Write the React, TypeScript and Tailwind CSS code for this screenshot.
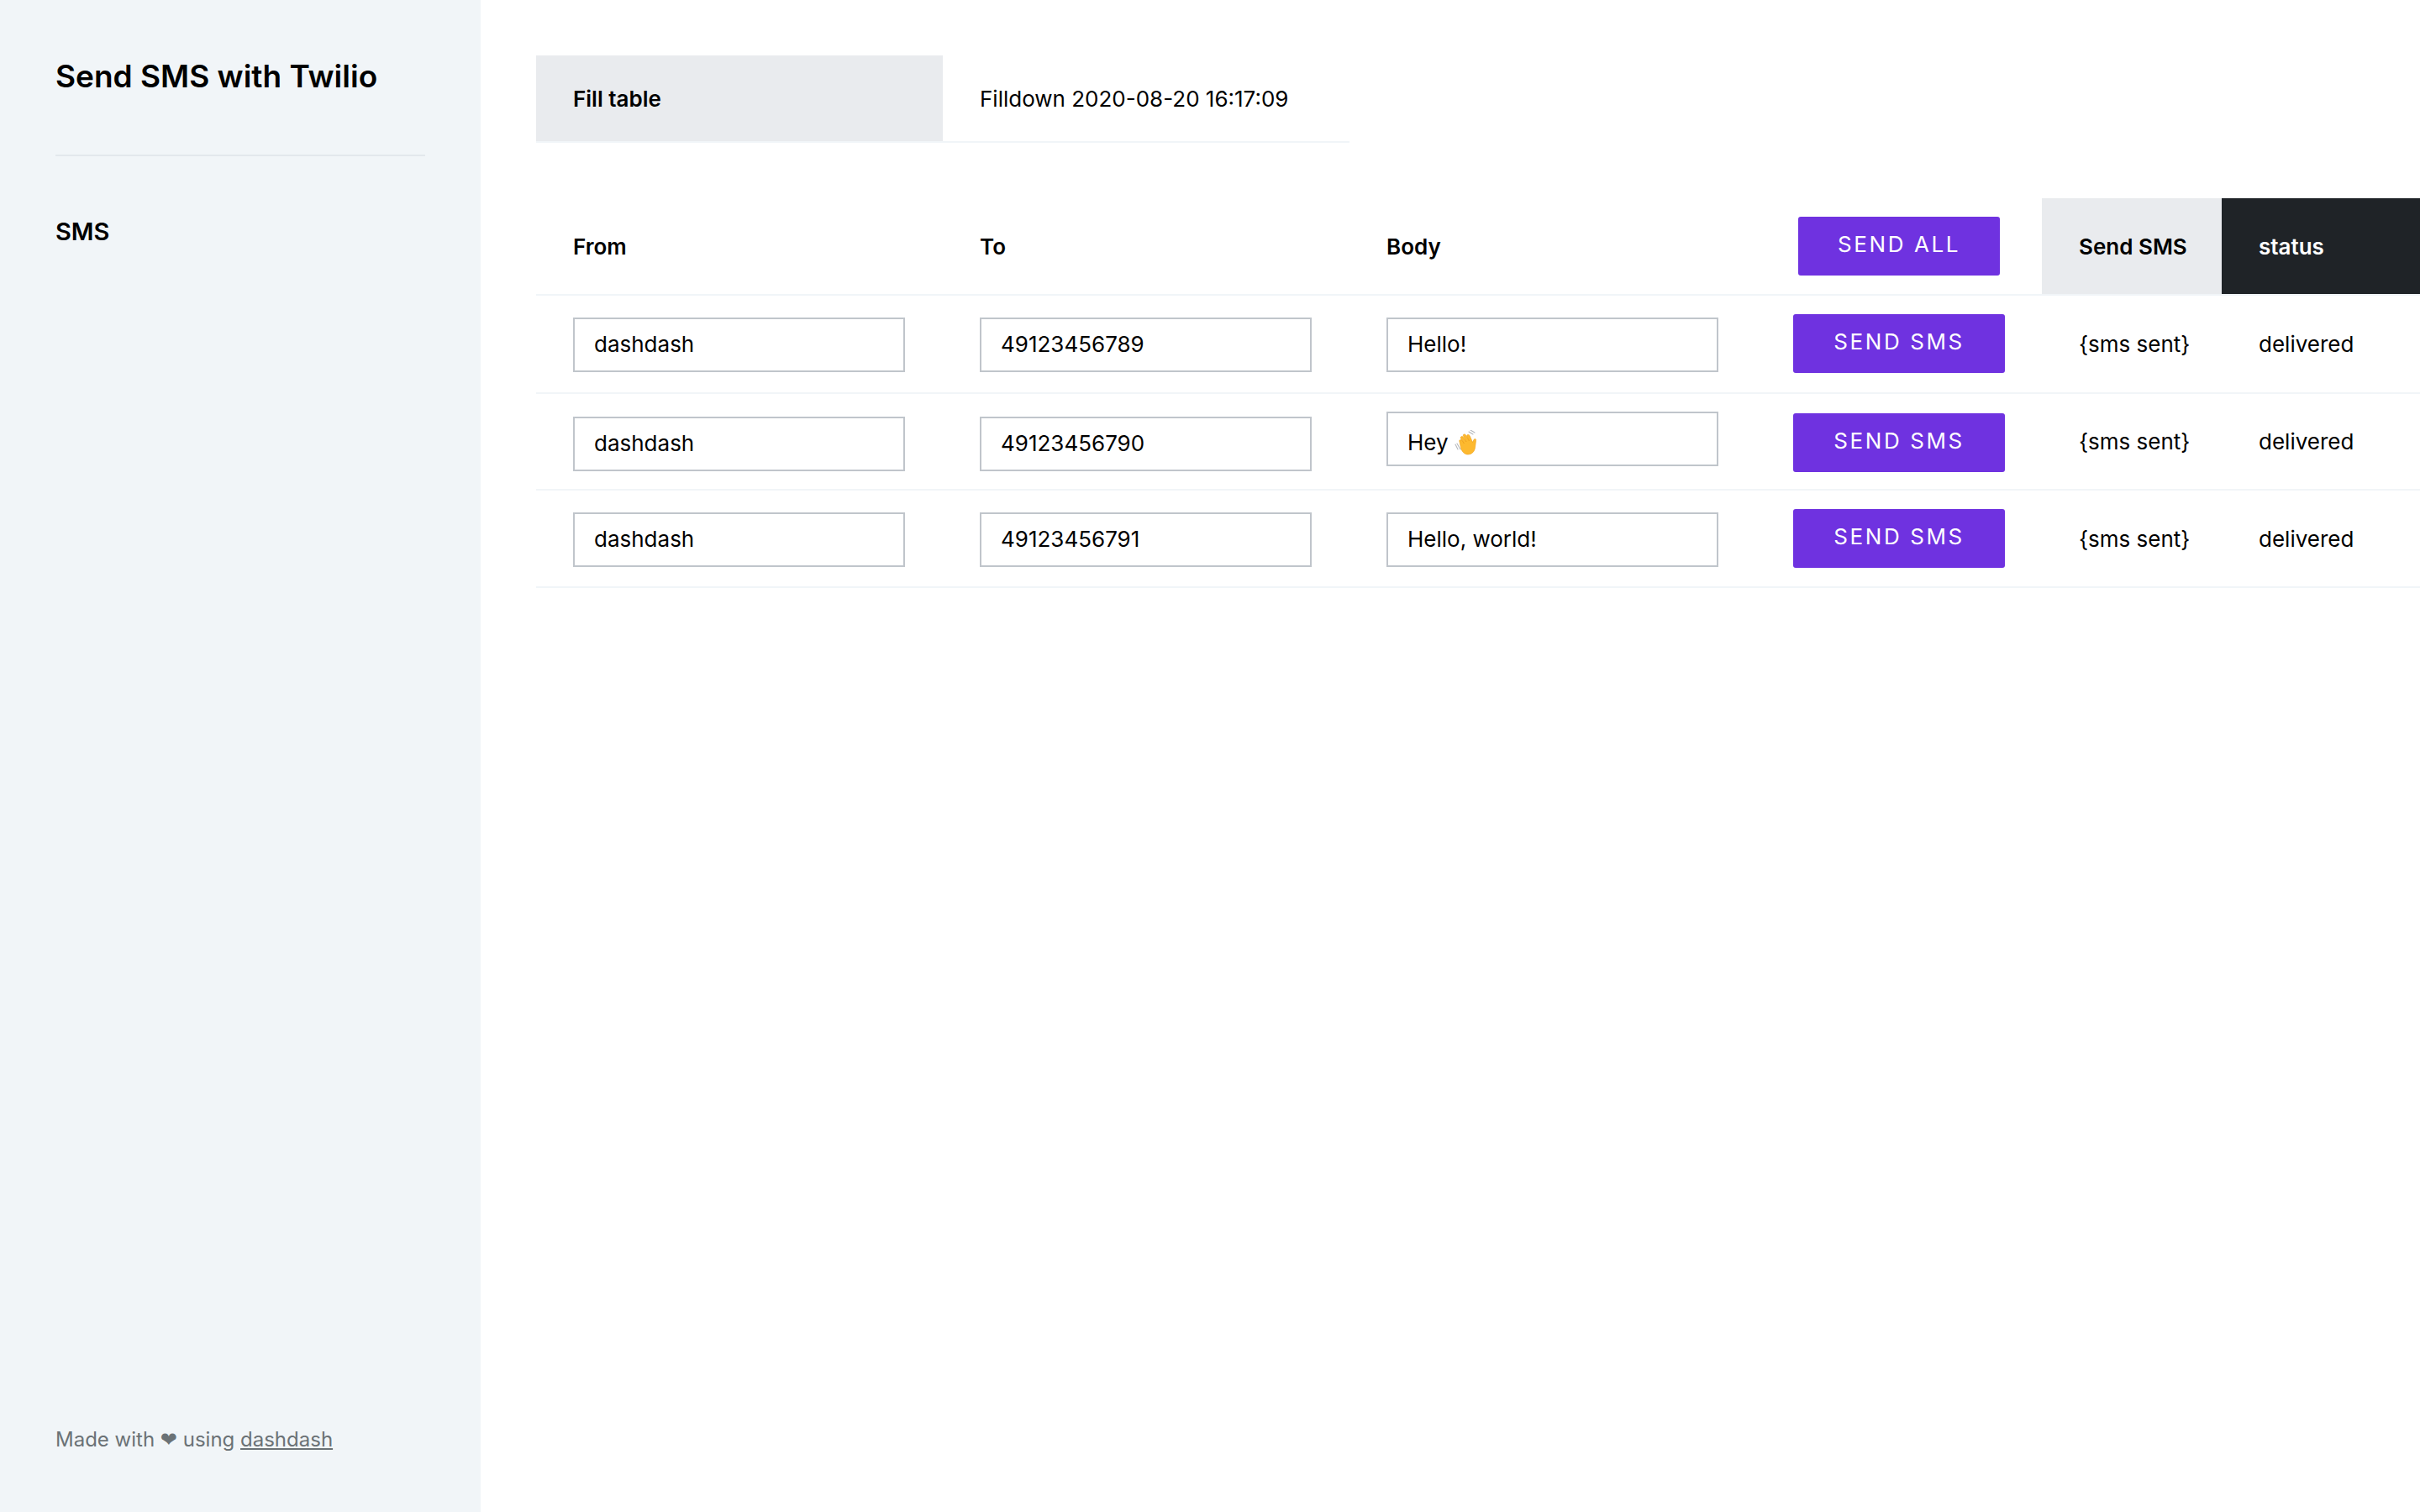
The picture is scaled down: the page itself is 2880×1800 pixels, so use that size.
const rows = [
  { from: 'dashdash', to: '49123456789', body: 'Hello!', wave: false, rowCls: 'h-[117px]', fieldCls: 'mt-[26px]', bodyCls: 'mt-[26px]', btnCls: 'mt-[22px]' },
  { from: 'dashdash', to: '49123456790', body: 'Hey', wave: true, rowCls: 'h-[115px]', fieldCls: 'mt-[27px]', bodyCls: 'mt-[21px] pt-[10px]', btnCls: 'mt-[23px]' },
  { from: 'dashdash', to: '49123456791', body: 'Hello, world!', wave: false, rowCls: 'h-[116px]', fieldCls: 'mt-[26px]', bodyCls: 'mt-[26px]', btnCls: 'mt-[22px]' },
];

function Wave() {
  return (
    <svg viewBox="0 0 30 30" className="ml-[7px] h-[30px] w-[30px]">
      <path d="M1 17l3 6M3 16l4 7M17 2l5 3M19 0l5 3" stroke="#b5b8bc" strokeWidth="1.1" fill="none" strokeLinecap="round" />
      <path d="M6 14c-1-2 1-3 2.500-2l3 4-4-6c-1-2 1-3 2.500-2l4 6-3.500-7c-1-2 2-3 3-1l4 7-2.500-5.500c-1-2 1.500-3 3-1l3.500 8 1.500-3c1-2 3-1 2.500 1l-1 8c-.5 5-4 8.500-8.500 8.500-4 0-6-2.500-8-6z" fill="#fdb92f" stroke="#ec9d16" strokeWidth=".6" />
    </svg>
  );
}

function Field({ text, wave, className }: { text: string; wave?: boolean; className: string }) {
  return (
    <div className={`flex h-[65px] w-[395px] items-center border-2 border-[#c0c5cb] bg-white pl-[23px] pb-[2px] text-[26px] text-black ${className}`}>
      {text}
      {wave && <Wave />}
    </div>
  );
}

function SendButton({ label, className }: { label: string; className: string }) {
  return (
    <button className={`flex h-[70px] items-center justify-center rounded-[3px] bg-[#6f32e0] pb-[5px] text-[26px] font-normal tracking-[2.6px] text-white ${className}`}>
      {label}
    </button>
  );
}

export default function App() {
  return (
    <div className="flex min-h-screen bg-white font-['Inter',sans-serif] text-black">
      <aside className="flex w-[572px] shrink-0 flex-col bg-[#f1f5f8] px-[66px]">
        <h1 className="mt-[66px] text-[37px] leading-[50px] font-semibold">Send SMS with Twilio</h1>
        <hr className="mt-[68px] border-t-2 border-[#e3e8ec]" />
        <div className="mt-[70px] text-[29px] leading-[40px] font-semibold">SMS</div>
        <footer className="mt-auto pb-[70px] text-[24px] leading-[32px] text-[#6b7276]">
          Made with <span className="font-['DejaVu_Sans',sans-serif]">❤</span> using <a className="underline" href="#">dashdash</a>
        </footer>
      </aside>

      <main className="min-w-0 flex-1 pt-[66px] pl-[66px]">
        <div className="flex h-[104px] w-[968px] border-b-2 border-[#f1f5f8] text-[26px]">
          <div className="flex w-[484px] items-center bg-[#e9ebee] pl-[44px] font-semibold">Fill table</div>
          <div className="flex items-center pl-[44px]">Filldown 2020-08-20 16:17:09</div>
        </div>

        <table className="mt-[66px] w-[2242px] table-fixed border-separate border-spacing-0 text-left text-[26px]">
          <colgroup>
            <col className="w-[484px]" />
            <col className="w-[484px]" />
            <col className="w-[484px]" />
            <col className="w-[340px]" />
            <col className="w-[214px]" />
            <col />
          </colgroup>
          <thead>
            <tr className="h-[116px] [&>th]:border-b-2 [&>th]:border-[#f1f5f8]">
              <th className="pl-[44px] font-semibold">From</th>
              <th className="pl-[44px] font-semibold">To</th>
              <th className="pl-[44px] font-semibold">Body</th>
              <th className="pl-[44px] align-top">
                <SendButton label="SEND ALL" className="mt-[22px] ml-[6px] w-[240px]" />
              </th>
              <th className="bg-[#e9ebee] pl-[44px] font-semibold">Send SMS</th>
              <th className="bg-[#1f2327] pl-[44px] font-semibold text-white">status</th>
            </tr>
          </thead>
          <tbody>
            {rows.map(row => (
              <tr key={row.to} className={`${row.rowCls} [&>td]:border-b-2 [&>td]:border-[#f1f5f8]`}>
                <td className="pl-[44px] align-top"><Field text={row.from} className={row.fieldCls} /></td>
                <td className="pl-[44px] align-top"><Field text={row.to} className={row.fieldCls} /></td>
                <td className="pl-[44px] align-top"><Field text={row.body} wave={row.wave} className={row.bodyCls} /></td>
                <td className="pl-[44px] align-top"><SendButton label="SEND SMS" className={`${row.btnCls} w-[252px]`} /></td>
                <td className="pl-[44px]">{'{sms sent}'}</td>
                <td className="pl-[44px]">delivered</td>
              </tr>
            ))}
          </tbody>
        </table>
      </main>
    </div>
  );
}
